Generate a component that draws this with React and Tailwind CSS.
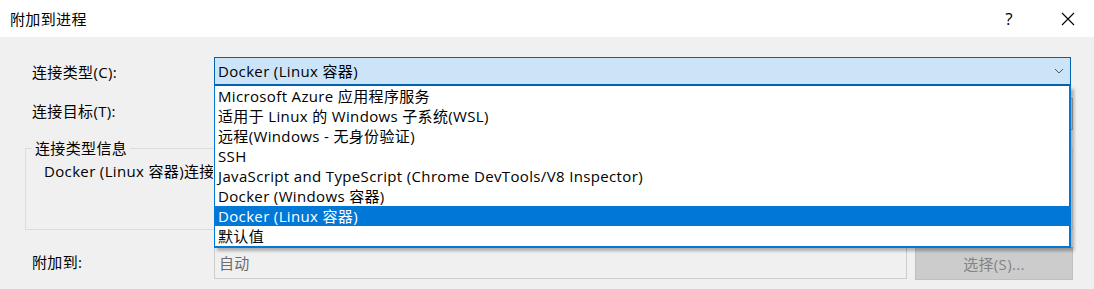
import React from "react";

const FONT = { fontFamily: '"Open Sans", "Noto Sans CJK SC", sans-serif' };

const items = [
  "Microsoft Azure 应用程序服务",
  "适用于 Linux 的 Windows 子系统(WSL)",
  "远程(Windows - 无身份验证)",
  "SSH",
  "JavaScript and TypeScript (Chrome DevTools/V8 Inspector)",
  "Docker (Windows 容器)",
  "Docker (Linux 容器)",
  "默认值",
];

export default function App() {
  return (
    <div
      className="w-[1094px] h-[289px] bg-[#f0f0f0] overflow-hidden text-[15px] tracking-[0.35px] text-black leading-[20px]"
      style={FONT}
    >
      {/* Title bar */}
      <div className="h-[37px] bg-white flex items-center pl-[10px]">
        <span className="flex-1">附加到进程</span>
        <span className="w-[12px] text-center mr-[46px] text-[17px]">?</span>
        <svg width="14" height="14" viewBox="0 0 14 14" className="mr-[19px]">
          <path d="M1 1 L13 13 M13 1 L1 13" stroke="#000" strokeWidth="1.1" fill="none" />
        </svg>
      </div>

      <div className="pt-[20px] flex flex-col">
        {/* Row 1: connection type */}
        <div className="flex items-center h-[29px] pl-[32px]">
          <span className="w-[182px]">连接类型(C):</span>
          <div className="relative z-10 w-[857px]">
            <div className="h-[29px] border border-[#0063b1] border-b-2 bg-[#cce4f7] flex items-center pl-[3px] pr-[6px]">
              <span className="flex-1">Docker (Linux 容器)</span>
              <svg width="10" height="6" viewBox="0 0 10 6">
                <path d="M1 1 L5 5 L9 1" stroke="#555" strokeWidth="1" fill="none" />
              </svg>
            </div>
            <div className="absolute left-0 top-full w-[857px] bg-white border-l border-r-2 border-b-2 border-[#0078d7] shadow-[3px_3px_3px_rgba(0,0,0,0.28)]">
              {items.map((t, i) => (
                <div
                  key={i}
                  className={
                    i === 6
                      ? "h-[20px] pl-[3px] bg-[#0078d7] text-white whitespace-nowrap"
                      : "h-[20px] pl-[3px] whitespace-nowrap"
                  }
                >
                  {t}
                </div>
              ))}
            </div>
          </div>
        </div>

        {/* Row 2: connection target (behind list) */}
        <div className="flex items-center h-[32px] pl-[32px] mt-[9px]">
          <span className="w-[182px]">连接目标(T):</span>
          <div className="w-[693px] h-[32px] border border-[#7a7a7a] bg-white"></div>
          <div className="ml-[8px] w-[158px] h-[32px] mt-[6px] border border-[#adadad] bg-[#e1e1e1]"></div>
        </div>

        {/* Group box */}
        <fieldset className="ml-[25px] w-[1048px] mt-[11px] h-[92px] border border-[#dcdcdc]">
          <legend className="ml-[6px] px-[3px] leading-[20px]">连接类型信息</legend>
          <div className="ml-[18px] mt-[3px] w-[169px] overflow-hidden whitespace-nowrap">
            Docker (Linux 容器)连接类型
          </div>
        </fieldset>

        {/* Row: attach to */}
        <div className="flex items-start pl-[32px] mt-[16px]">
          <span className="w-[182px] h-[31px] flex items-center">附加到:</span>
          <div className="w-[693px] h-[33px] border border-[#cccccc] bg-[#f0f0f0] flex items-center pl-[4px] text-[#6d6d6d]">
            自动
          </div>
          <div className="ml-[8px] mt-[1px] w-[158px] h-[33px] border border-[#bfbfbf] bg-[#cccccc] flex items-center justify-center text-[#838383]">
            选择(S)...
          </div>
        </div>
      </div>
    </div>
  );
}
